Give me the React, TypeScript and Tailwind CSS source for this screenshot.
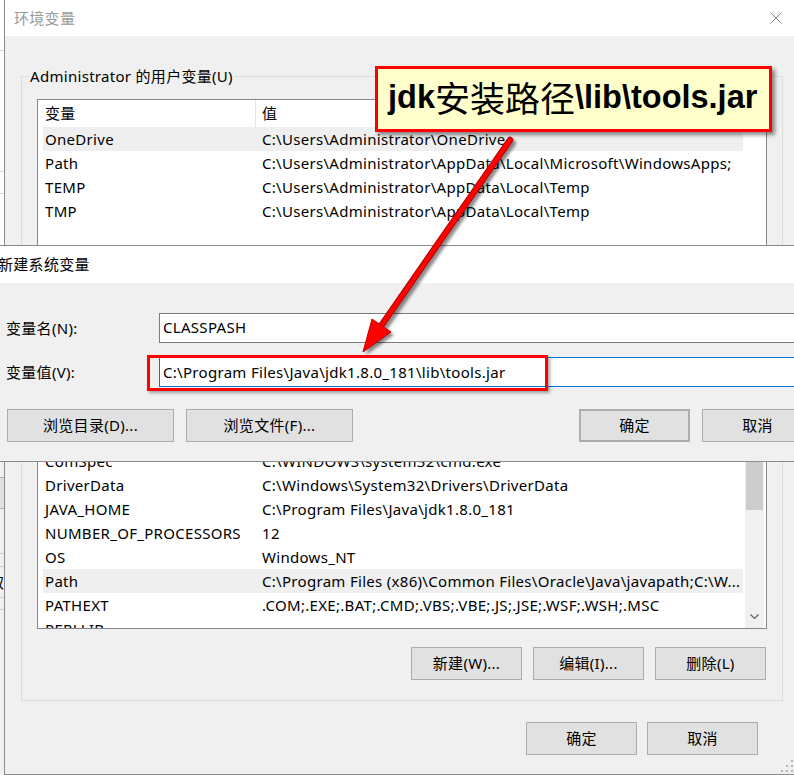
import React from "react";

const F = "font-['Noto_Sans','Noto_Sans_CJK_SC',sans-serif]";

function Btn({ children, className = "" }: { children?: React.ReactNode; className?: string }) {
  return (
    <div
      className={`h-[33px] w-[111px] shrink-0 flex items-center justify-center bg-[#e1e1e1] border border-[#adadad] text-[15px] text-black ${className}`}
    >
      {children}
    </div>
  );
}

function Row({ name, value, hl = false }: { name: string; value: string; hl?: boolean }) {
  return (
    <div className={`ml-[5px] w-[700px] h-[24px] shrink-0 flex items-center whitespace-nowrap ${hl ? "bg-[#efefef]" : ""}`}>
      <div className="w-[212px] shrink-0 pl-[2px]">{name}</div>
      <div className="pl-[7px]">{value}</div>
    </div>
  );
}

function Header({ a, b }: { a: string; b: string }) {
  return (
    <div className="h-[27px] shrink-0 flex items-stretch">
      <div className="w-[218px] shrink-0 pl-[7px] flex items-center border-r border-[#e5e5e5]">{a}</div>
      <div className="pl-[6px] flex items-center">{b}</div>
    </div>
  );
}

export default function App() {
  return (
    <div className={`relative w-[794px] h-[775px] overflow-hidden flex bg-white text-[15px] tracking-[0.3px] text-black ${F}`}>
      {/* window behind, left strip */}
      <div className="w-[4px] shrink-0 flex flex-col bg-white overflow-hidden">
        <div className="h-[50px] shrink-0" />
        <div className="h-px shrink-0 bg-[#d4d4d4]" />
        <div className="h-[120px] shrink-0" />
        <div className="h-px shrink-0 bg-[#d4d4d4]" />
        <div className="h-[21px] shrink-0" />
        <div className="h-px shrink-0 bg-[#d4d4d4]" />
        <div className="h-[267px] shrink-0" />
        <div className="flex-1 bg-[#f0f0f0] flex flex-col">
          <div className="h-[16px] shrink-0" />
          <div className="h-[32px] shrink-0 bg-[#e1e1e1] border-y border-[#adadad]" />
          <div className="h-[44px] shrink-0" />
          <div className="h-px shrink-0 bg-[#d0d0d0]" />
          <div className="h-[12px] shrink-0" />
          <div className="h-px shrink-0 bg-[#d0d0d0]" />
          <div className="h-[30px] shrink-0 flex items-center whitespace-nowrap">
            <span className="-ml-[11px] text-[15px]">取</span>
          </div>
          <div className="h-px shrink-0 bg-[#d0d0d0]" />
          <div className="h-[11px] shrink-0" />
          <div className="h-px shrink-0 bg-[#d0d0d0]" />
        </div>
      </div>

      {/* main window 环境变量 */}
      <div className="relative flex-1 flex flex-col border-l border-b border-[#8c8c8c]">
        <div className="h-[36px] shrink-0 bg-white flex items-center justify-between pl-[9px] pr-[12px]">
          <span className="text-[#9a9a9a]">环境变量</span>
          <svg width="12" height="12" viewBox="0 0 12 12">
            <path d="M0.5 0.5 L11.5 11.5 M11.5 0.5 L0.5 11.5" stroke="#8a8a8a" strokeWidth="1" fill="none" />
          </svg>
        </div>
        <div className="flex-1 bg-[#f0f0f0] pt-[30px] pl-[16px] flex flex-col">
          {/* user variables group */}
          <fieldset className="w-[762px] border border-[#dcdcdc] pb-[20px]">
            <legend className="ml-[7px] px-[1px] leading-[20px]">Administrator 的用户变量(U)</legend>
            <div className="pl-[15px] flex flex-col">
              <div className="mt-[13px] w-[730px] h-[150px] border border-[#828790] bg-white flex flex-col overflow-hidden">
                <Header a="变量" b="值" />
                <Row name="OneDrive" value={"C:\\Users\\Administrator\\OneDrive"} hl />
                <Row name="Path" value={"C:\\Users\\Administrator\\AppData\\Local\\Microsoft\\WindowsApps;"} />
                <Row name="TEMP" value={"C:\\Users\\Administrator\\AppData\\Local\\Temp"} />
                <Row name="TMP" value={"C:\\Users\\Administrator\\AppData\\Local\\Temp"} />
              </div>
              {/* buttons of this group lie under the dialog */}
              <div className="mt-[18px] flex justify-end pr-[16px] gap-[11px]">
                <Btn />
                <Btn />
                <Btn />
              </div>
            </div>
          </fieldset>

          {/* system variables group */}
          <fieldset className="mt-[19px] w-[762px] border border-[#dcdcdc] pb-[20px]">
            <legend className="ml-[7px] px-[1px] leading-[20px] h-[20px] w-[90px]" />
            <div className="pl-[15px] flex flex-col">
              <div className="mt-[13px] w-[730px] h-[256px] border border-[#828790] bg-white flex overflow-hidden">
                <div className="flex-1 flex flex-col overflow-hidden">
                  <Header a="" b="" />
                  <Row name="" value="" />
                  <Row name="" value="" />
                  <Row name="ComSpec" value={"C:\\WINDOWS\\system32\\cmd.exe"} />
                  <Row name="DriverData" value={"C:\\Windows\\System32\\Drivers\\DriverData"} />
                  <Row name="JAVA_HOME" value={"C:\\Program Files\\Java\\jdk1.8.0_181"} />
                  <Row name="NUMBER_OF_PROCESSORS" value="12" />
                  <Row name="OS" value="Windows_NT" />
                  <Row name="Path" value={"C:\\Program Files (x86)\\Common Files\\Oracle\\Java\\javapath;C:\\W..."} hl />
                  <Row name="PATHEXT" value=".COM;.EXE;.BAT;.CMD;.VBS;.VBE;.JS;.JSE;.WSF;.WSH;.MSC" />
                  <Row name="PERLLIB" value="" />
                </div>
                <div className="w-[19px] mr-[2px] shrink-0 flex flex-col bg-[#f0f0f0]">
                  <div className="h-[20px] shrink-0" />
                  <div className="h-[40px] shrink-0" />
                  <div className="h-[76px] shrink-0 mx-[1px] bg-[#cdcdcd]" />
                  <div className="flex-1" />
                  <div className="h-[22px] shrink-0 flex items-center justify-center">
                    <svg width="9" height="6" viewBox="0 0 9 6">
                      <path d="M0.5 0.5 L4.5 4.5 L8.5 0.5" stroke="#606060" strokeWidth="1.2" fill="none" />
                    </svg>
                  </div>
                </div>
              </div>
              <div className="mt-[18px] flex justify-end pr-[16px] gap-[11px]">
                <Btn>新建(W)...</Btn>
                <Btn>编辑(I)...</Btn>
                <Btn>删除(L)</Btn>
              </div>
            </div>
          </fieldset>

          <div className="mt-[21px] ml-[505px] flex gap-[10px]">
            <Btn>确定</Btn>
            <Btn>取消</Btn>
          </div>
        </div>
        <svg className="absolute right-0 bottom-[1px]" width="13" height="13" viewBox="0 0 13 13">
          <g fill="#b5b5b5">
            <rect x="10" y="0" width="2" height="2" />
            <rect x="5" y="5" width="2" height="2" />
            <rect x="10" y="5" width="2" height="2" />
            <rect x="0" y="10" width="2" height="2" />
            <rect x="5" y="10" width="2" height="2" />
            <rect x="10" y="10" width="2" height="2" />
          </g>
        </svg>
      </div>

      {/* 新建系统变量 dialog overlay */}
      <div className="absolute left-0 top-[245px] w-[794px] h-[217px] border-y border-[#8c8c8c] flex flex-col overflow-hidden">
        <div className="h-[37px] shrink-0 bg-white flex items-center">
          <span className="-ml-[2px]">新建系统变量</span>
        </div>
        <div className="flex-1 bg-[#f0f0f0] pt-[30px] flex flex-col">
          <div className="h-[30px] flex items-center">
            <div className="w-[159px] shrink-0 pl-[6px]">变量名(N):</div>
            <div className="w-[660px] shrink-0 h-[30px] border border-[#7a7a7a] bg-white flex items-center pl-[3px] pb-[2px]">CLASSPASH</div>
          </div>
          <div className="mt-[14px] h-[30px] flex items-center">
            <div className="w-[159px] shrink-0 pl-[6px]">变量值(V):</div>
            <div className="w-[660px] shrink-0 h-[30px] border border-[#0078d7] bg-white flex items-center pl-[3px] whitespace-nowrap">
              {"C:\\Program Files\\Java\\jdk1.8.0_181\\lib\\tools.jar"}
            </div>
          </div>
          <div className="mt-[22px] flex pl-[7px]">
            <Btn className="w-[167px]">浏览目录(D)...</Btn>
            <Btn className="ml-[12px] w-[167px]">浏览文件(F)...</Btn>
            <Btn className="ml-[226px] border-2 border-[#0078d7]">确定</Btn>
            <Btn className="ml-[12px]">取消</Btn>
          </div>
        </div>
      </div>

      {/* red highlight box */}
      <div className="absolute left-[147px] top-[355px] w-[401px] h-[36px] border-[3px] border-[#ff0000] shadow-[2px_2px_3px_rgba(0,0,0,0.35)]" />

      {/* callout */}
      <div className="absolute left-[375px] top-[66px] w-[397px] h-[66px] border-[3px] border-[#ff0000] bg-[#ffffcc] shadow-[3px_3px_4px_rgba(0,0,0,0.45)] flex items-center pl-[10px] pb-[3px] whitespace-nowrap tracking-normal text-black">
        <span className="font-['Liberation_Sans',Arial,sans-serif] font-bold text-[32.5px]">jdk</span>
        <span className="font-['Noto_Sans_CJK_SC',sans-serif] font-normal text-[35px]">安装路径</span>
        <span className="font-['Liberation_Sans',Arial,sans-serif] font-bold text-[32.5px]">{"\\lib\\tools.jar"}</span>
      </div>

      {/* arrow */}
      <svg className="absolute left-0 top-0 pointer-events-none" width="794" height="775" viewBox="0 0 794 775">
        <defs>
          <filter id="sh" x="-20%" y="-20%" width="140%" height="140%">
            <feGaussianBlur stdDeviation="1.5" />
          </filter>
        </defs>
        <g transform="translate(3 3)" filter="url(#sh)" opacity="0.45">
          <path d="M510 140 L381 326" stroke="#000" strokeWidth="6" strokeLinecap="round" />
          <polygon points="363,352 372,319 391,332" fill="#000" />
        </g>
        <path d="M510 140 L381 326" stroke="#b30000" strokeWidth="6.5" strokeLinecap="round" />
        <path d="M510 140 L381 326" stroke="#ff0000" strokeWidth="4.5" strokeLinecap="round" />
        <polygon points="363,352 372,319 391,332" fill="#ff0000" stroke="#c00000" strokeWidth="1" strokeLinejoin="round" />
      </svg>
    </div>
  );
}
